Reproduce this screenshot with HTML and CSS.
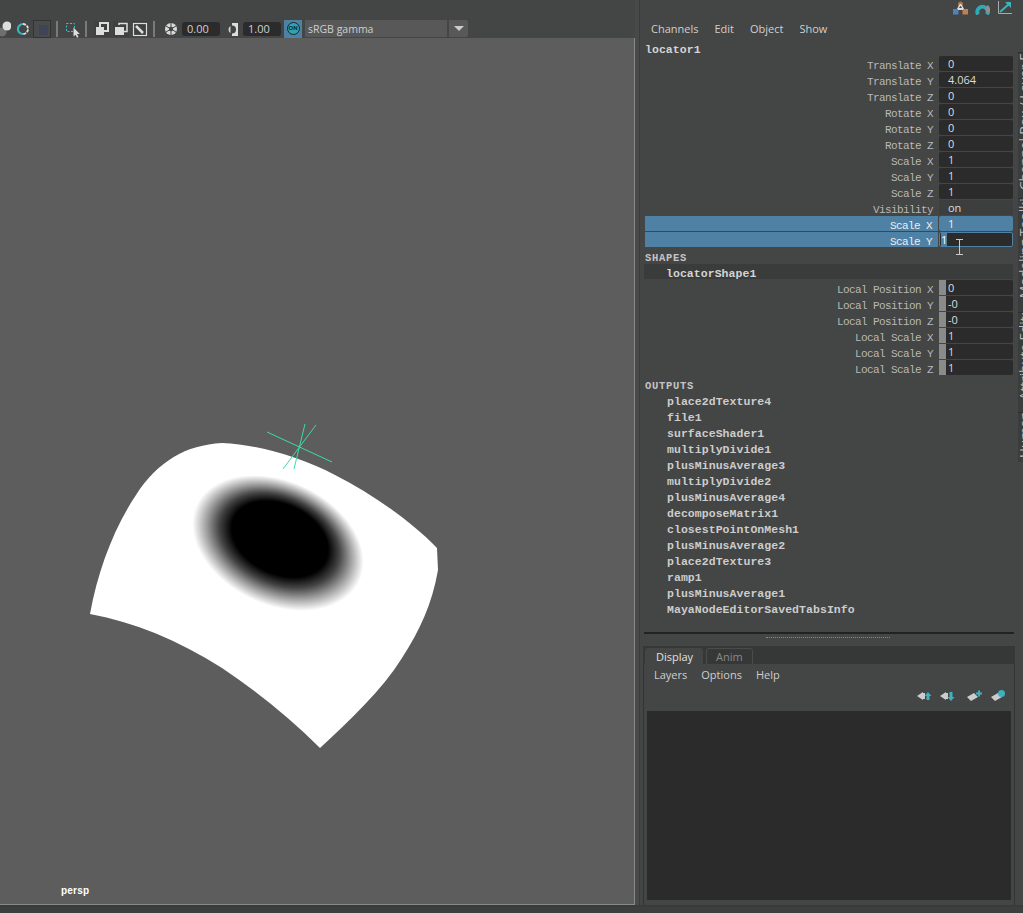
FILE: index.html
```html
<!DOCTYPE html>
<html lang="en">
<head>
<meta charset="utf-8">
<title>Channel Box</title>
<link rel="stylesheet" href="styles.css">
</head>
<body>
<div class="app">
  <div class="main">
    <section class="left">
      <div class="topgap"></div>
      <div class="toolbar">
        <svg class="ic w11" viewBox="0 0 11 18"><circle cx="2" cy="12" r="4.500" fill="#6f6f6f"/><circle cx="7" cy="6" r="4.500" fill="#ddd"/></svg>
        <svg class="ic w12 m6" viewBox="0 0 12 18"><path d="M6 4a5 5 0 0 1 0 10" fill="none" stroke="#ddd" stroke-width="1.800" stroke-dasharray="3 1"/><path d="M6 4a5 5 0 0 0 0 10" fill="none" stroke="#39b5c0" stroke-width="2.200"/></svg>
        <div class="swatchbtn m4"><span class="swatch"></span></div>
        <i class="sep m5"></i>
        <svg class="ic w15 m7" viewBox="0 0 15 18"><rect x="1.500" y="3.500" width="8" height="8" fill="none" stroke="#39c5c8" stroke-dasharray="2 1.500"/><path d="M8.500 7.500v9l2-1.800 1.500 3 1.500-.8-1.500-3h2.800z" fill="#ddd"/></svg>
        <i class="sep m5"></i>
        <div class="toolbtn m7"><svg viewBox="0 0 16 16"><rect x="6" y="2" width="8" height="8" fill="none" stroke="#ddd" stroke-width="2"/><rect x="2" y="6" width="8" height="8" fill="#ddd"/></svg></div>
        <div class="toolbtn m3"><svg viewBox="0 0 16 16"><path d="M6 4V2.500h8v8h-3" fill="none" stroke="#ddd" stroke-width="1.500"/><rect x="2" y="6" width="9" height="8" fill="#ddd"/></svg></div>
        <div class="toolbtn m3"><svg viewBox="0 0 16 16"><rect x="1.500" y="2.500" width="13" height="12" fill="none" stroke="#ddd" stroke-width="1.200"/><path d="M4 5l7 7" stroke="#ddd" stroke-width="2.500"/></svg></div>
        <i class="sep m5"></i>
        <svg class="ic w12 m10" viewBox="0 0 12 18"><circle cx="6" cy="9" r="6" fill="#d8d8d8"/><path d="M6 9L6 3M6 9L11 6M6 9L11 12M6 9L6 15M6 9L1 12M6 9L1 6" stroke="#444" stroke-width="1"/><circle cx="6" cy="9" r="2.200" fill="#444"/></svg>
        <span class="numfield m5">0.00</span>
        <svg class="ic w12 m6" viewBox="0 0 12 18"><path d="M6 3h6v13H6z" fill="#ddd"/><circle cx="6" cy="9.500" r="4" fill="#444"/><path d="M4.500 6a4 4 0 0 0 0 7z" fill="#ccc"/></svg>
        <span class="numfield m5">1.00</span>
        <div class="onbtn m3"><span class="onring">ON</span></div>
        <div class="combo m3">sRGB gamma</div>
        <div class="comboarrow m2"><span class="tri"></span></div>
      </div>
      <div class="viewport">
        <svg class="scene" viewBox="0 0 634 866">
          <defs>
            <radialGradient id="spot" cx="0.5" cy="0.5" r="0.5" fx="0.5" fy="0.42">
              <stop offset="0" stop-color="#000"/>
              <stop offset="0.56" stop-color="#000"/>
              <stop offset="0.7" stop-color="#444"/>
              <stop offset="0.85" stop-color="#a4a4a4"/>
              <stop offset="1" stop-color="#fff"/>
            </radialGradient>
          </defs>
          <path d="M90 576C98 532 114 490 136 457C158 423 186 407 222 405C262 407 302 420 335 437C372 456 410 482 437 510L438 532C432 566 420 592 402 620C382 652 350 682 320 710C290 680 258 654 222 630C178 602 134 584 90 576Z" fill="#fff"/>
          <ellipse cx="278" cy="505" rx="90" ry="62" transform="rotate(25 278 505)" fill="url(#spot)"/>
          <path d="M267 394L332 424M305 386L294 431M316 387L283 431" stroke="#3ddbaa" stroke-width="1" fill="none"/>
        </svg>
        <span class="persp">persp</span>
      </div>
    </section>
    <div class="divider"></div>
    <section class="right">
      <div class="panel">
        <div class="panelicons">
          <svg class="pi" viewBox="0 0 15 14"><circle cx="7.500" cy="3" r="2.500" fill="#a8734f"/><path d="M7.500 3L3 11M7.500 3L12 11" stroke="#ddd" stroke-width="1.500"/><rect x="0" y="8" width="5.500" height="5.500" fill="#4f81c0"/><rect x="9.500" y="8" width="5.500" height="5.500" fill="#c08050"/><rect x="5" y="7" width="5" height="2" fill="#ddd"/></svg>
          <svg class="pi" viewBox="0 0 15 14"><path d="M3 13.500A5.200 5.200 0 1 1 12 13.500" fill="none" stroke="#2fa9b5" stroke-width="4"/><path d="M11.500 5.500a5.200 5.200 0 0 1 1 6" fill="none" stroke="#8f8f8f" stroke-width="4"/></svg>
          <svg class="pi" viewBox="0 0 15 14"><path d="M1.500 0v12.500H15" fill="none" stroke="#aaa"/><path d="M3 11L12 3" stroke="#39b5c0" stroke-width="2"/><path d="M8 1h6v6z" fill="#39b5c0"/></svg>
        </div>
        <nav class="menubar channels">
          <span>Channels</span><span>Edit</span><span>Object</span><span>Show</span>
        </nav>
        <div class="nodetitle">locator1</div>
        <div class="attrs">
          <div class="row"><span class="label">Translate X</span><span class="field">0</span></div>
          <div class="row"><span class="label">Translate Y</span><span class="field">4.064</span></div>
          <div class="row"><span class="label">Translate Z</span><span class="field">0</span></div>
          <div class="row"><span class="label">Rotate X</span><span class="field">0</span></div>
          <div class="row"><span class="label">Rotate Y</span><span class="field">0</span></div>
          <div class="row"><span class="label">Rotate Z</span><span class="field">0</span></div>
          <div class="row"><span class="label">Scale X</span><span class="field">1</span></div>
          <div class="row"><span class="label">Scale Y</span><span class="field">1</span></div>
          <div class="row"><span class="label">Scale Z</span><span class="field">1</span></div>
          <div class="row"><span class="label">Visibility</span><span class="field dim">on</span></div>
          <div class="row sel"><span class="label">Scale X</span><span class="field">1</span></div>
          <div class="row sel"><span class="label">Scale Y</span><span class="field edit"><b class="caret">1</b>
            <svg class="ibeam" viewBox="0 0 9 16"><path d="M1 .5h7M1 15.500h7M4.500 .5v15" stroke="#ccc" fill="none"/></svg></span></div>
        </div>
        <div class="section">SHAPES</div>
        <div class="shapehead">locatorShape1</div>
        <div class="attrs">
          <div class="row"><span class="label">Local Position X</span><span class="field keyed">0</span></div>
          <div class="row"><span class="label">Local Position Y</span><span class="field keyed">-0</span></div>
          <div class="row"><span class="label">Local Position Z</span><span class="field keyed">-0</span></div>
          <div class="row"><span class="label">Local Scale X</span><span class="field keyed">1</span></div>
          <div class="row"><span class="label">Local Scale Y</span><span class="field keyed">1</span></div>
          <div class="row"><span class="label">Local Scale Z</span><span class="field keyed">1</span></div>
        </div>
        <div class="section">OUTPUTS</div>
        <ul class="outputs">
          <li>place2dTexture4</li>
          <li>file1</li>
          <li>surfaceShader1</li>
          <li>multiplyDivide1</li>
          <li>plusMinusAverage3</li>
          <li>multiplyDivide2</li>
          <li>plusMinusAverage4</li>
          <li>decomposeMatrix1</li>
          <li>closestPointOnMesh1</li>
          <li>plusMinusAverage2</li>
          <li>place2dTexture3</li>
          <li>ramp1</li>
          <li>plusMinusAverage1</li>
          <li>MayaNodeEditorSavedTabsInfo</li>
        </ul>
        <div class="splitline"></div>
        <div class="dots"></div>
        <div class="tabbar">
          <span class="tab active">Display</span>
          <span class="tab">Anim</span>
        </div>
        <div class="layers">
          <nav class="menubar layermenu">
            <span>Layers</span><span>Options</span><span>Help</span>
          </nav>
          <div class="layericons">
            <svg class="li" viewBox="0 0 15 12"><path d="M0 6l6-4v8z" fill="#ccc"/><path d="M4 3h4v6H4z" fill="#ccc"/><path d="M11 2l3.500 4H12.500v4h-3V6H7.500z" fill="#3fb0bd"/></svg>
            <svg class="li l2" viewBox="0 0 15 12"><path d="M0 6l6-4v8z" fill="#ccc"/><path d="M4 3h4v6H4z" fill="#ccc"/><path d="M11 11l3.500-4H12.500V2h-3v5H7.500z" fill="#3fb0bd"/></svg>
            <svg class="li l3" viewBox="0 0 15 12"><path d="M0 7l7-4 4 4-7 4z" fill="#ccc"/><path d="M9 3.500h6M12 .5v6" stroke="#3fb0bd" stroke-width="2"/></svg>
            <svg class="li l4" viewBox="0 0 15 12"><path d="M0 7l7-4 4 4-7 4z" fill="#ccc"/><circle cx="10.500" cy="3.500" r="3.500" fill="#3fb0bd"/></svg>
          </div>
          <div class="layerlist"></div>
        </div>
      </div>
      <div class="sidetabs">
        <div class="sidetab t1"><span>Channel Box / Layer Editor</span></div>
        <div class="sidetab t2"><span>Modeling Toolkit</span></div>
        <div class="sidetab t3"><span>Attribute Editor</span></div>
        <div class="sidetab t4"><span>HumanIK</span></div>
      </div>
    </section>
  </div>
  <div class="statusbar"></div>
</div>
</body>
</html>
```
FILE: styles.css
```css
* { box-sizing: border-box; }
html, body { margin: 0; padding: 0; height: 100%; }
body { background: #444545; overflow: hidden; font-family: "Open Sans", "Liberation Sans", sans-serif; }
.app { width: 1023px; height: 913px; display: flex; flex-direction: column; overflow: hidden; }
.main { display: flex; height: 905px; }
.statusbar { height: 8px; background: #3d3e3e; border-top: 2px solid #393a3a; }

.left { width: 635px; display: flex; flex-direction: column; flex: none; }
.topgap { height: 19px; flex: none; }
.toolbar { height: 19px; flex: none; display: flex; align-items: center; background: #444545; }
.viewport { position: relative; flex: 1; background: #5d5d5d; border-right: 1px solid #8a8a8a; border-bottom: 1px solid #8a8a8a; }
.scene { display: block; width: 634px; height: 866px; }
.persp { position: absolute; left: 61px; top: 846px; font: bold 10px/14px "Liberation Sans", sans-serif; letter-spacing: .2px; color: #fff; }

.ic { display: block; height: 18px; flex: none; }
.w11 { width: 11px; } .w12 { width: 12px; } .w15 { width: 15px; }
.m2 { margin-left: 2px; } .m3 { margin-left: 3px; } .m4 { margin-left: 4px; } .m5 { margin-left: 5px; }
.m6 { margin-left: 6px; } .m7 { margin-left: 7px; } .m10 { margin-left: 10px; }
.sep { display: block; width: 2px; height: 16px; background: #7a7a7a; flex: none; }
.swatchbtn { width: 18px; height: 18px; border: 1px solid #333; background: #4a4b4b; display: flex; justify-content: flex-end; align-items: flex-end; padding: 2px; flex: none; }
.swatch { width: 9px; height: 10px; background: #3f4556; display: block; }
.toolbtn { width: 16px; height: 16px; background: #3f4040; flex: none; }
.toolbtn svg { display: block; width: 16px; height: 16px; }
.numfield { width: 38px; height: 14px; background: #2b2b2b; border-radius: 3px; color: #d0d0d0; font-size: 11px; line-height: 14px; padding-left: 5px; flex: none; }
.onbtn { width: 18px; height: 18px; background: #4f81a5; display: flex; align-items: center; justify-content: center; flex: none; }
.onring { width: 13px; height: 13px; border-radius: 50%; background: #2ea2ad; border: 1px solid #222; color: #123; font: bold 6px/11px "Liberation Sans", sans-serif; text-align: center; }
.combo { width: 142px; height: 17px; background: #585858; color: #cfcfcf; font-size: 10.500px; line-height: 18px; padding-left: 3px; flex: none; }
.comboarrow { width: 19px; height: 17px; background: #585858; border-radius: 0 2px 2px 0; display: flex; align-items: center; justify-content: center; flex: none; }
.tri { width: 0; height: 0; border-left: 5px solid transparent; border-right: 5px solid transparent; border-top: 5px solid #ccc; }

.divider { width: 5px; flex: none; background: #484949; border-right: 1px solid #3a3b3b; }
.right { flex: 1; display: flex; min-width: 0; }
.panel { width: 378px; flex: none; padding: 0 5px; display: flex; flex-direction: column; background: #444545; }
.panelicons { height: 19px; display: flex; justify-content: flex-end; gap: 7px; padding: 1px 1px 0 0; flex: none; }
.pi { display: block; width: 15px; height: 14px; }
.menubar { display: flex; font-size: 11px; line-height: 16px; color: #cfcfcf; flex: none; }
.channels { height: 20px; gap: 16px; padding: 2px 0 0 6px; }
.nodetitle { height: 17px; font: bold 11.500px/22px "Liberation Mono", monospace; letter-spacing: .05px; color: #d4d4d4; flex: none; }
.attrs { display: flex; flex-direction: column; flex: none; }
.row { display: flex; height: 15px; margin-bottom: 1px; flex: none; }
.label { flex: 1; text-align: right; padding-right: 6px; font: 11px/20px "Liberation Mono", monospace; letter-spacing: -.6px; color: #b8b8b8; white-space: nowrap; height: 15px; }
.field { position: relative; width: 74px; background: #2b2b2b; border-radius: 2px; color: #dcdcdc; font-size: 11px; line-height: 16px; padding-left: 9px; flex: none; }
.dim { background: #3d3e3e; }
.sel .label { background: #4f81a5; color: #eee; margin-right: 1px; }
.sel .field { background: #4f81a5; color: #eee; }
.sel .edit { background: #2b2b2b; border: 1px solid #4f81a5; padding-left: 1px; line-height: 13px; }
.caret { display: inline-block; background: #4f81a5; font-weight: 400; width: 6px; text-align: center; color: #fff; }
.ibeam { position: absolute; left: 15px; top: 6px; width: 9px; height: 16px; }
.keyed { border-left: 7px solid #8a8a8a; border-radius: 0 2px 2px 0; padding-left: 2px; }
.section { height: 16px; font: bold 10.500px/20px "Liberation Mono", monospace; letter-spacing: .7px; color: #c4c4c4; flex: none; }
.shapehead { height: 15px; margin: 0 0 1px -1px; background: #3a3b3b; padding-left: 22px; font: bold 11.500px/20px "Liberation Mono", monospace; letter-spacing: .05px; color: #d4d4d4; flex: none; }
.outputs { list-style: none; margin: 1px 0 0; padding: 0 0 0 22px; flex: none; }
.outputs li { height: 16px; font: bold 11.500px/18px "Liberation Mono", monospace; letter-spacing: .05px; color: #cdcdcd; }
.splitline { height: 2px; margin: 15px 0 0 -1px; background: #222; width: 370px; flex: none; }
.dots { height: 1px; width: 124px; margin: 3px 0 0 121px; border-top: 1px dotted #8a8a8a; flex: none; }
.tabbar { height: 18px; margin: 8px 0 0 -2px; width: 372px; background: #363737; display: flex; align-items: flex-end; padding-left: 2px; gap: 3px; flex: none; }
.tab { height: 16px; color: #8a8a8a; font-size: 11px; line-height: 16px; padding: 0 9px; border: 1px solid #4a4b4b; border-bottom: 0; border-radius: 3px 3px 0 0; }
.tab.active { background: #444545; color: #e0e0e0; border-color: #444545; padding: 0 10px; width: 58px; }
.layers { flex: 1; margin-left: -2px; width: 372px; display: flex; flex-direction: column; background: #444545; border-left: 1px solid #333; border-right: 1px solid #333; padding-bottom: 5px; }
.layermenu { height: 22px; gap: 14px; padding: 3px 0 0 10px; flex: none; }
.layericons { height: 25px; display: flex; justify-content: flex-end; padding: 4px 8px 0 0; flex: none; }
.li { display: block; width: 15px; height: 12px; }
.l2 { margin-left: 8px; } .l3 { margin-left: 12px; } .l4 { margin-left: 9px; }
.layerlist { flex: 1; margin: 0 3px; background: #2b2b2b; }

.sidetabs { width: 5px; flex: none; display: flex; flex-direction: column; padding-top: 52px; background: #444545; overflow: hidden; }
.sidetab { background: #3b3c3c; border-top: 1px solid #2f2f2f; overflow: hidden; flex: none; }
.sidetab span { display: block; writing-mode: vertical-rl; transform: rotate(180deg); font-size: 13.500px; line-height: 12px; color: #bbb; height: 100%; white-space: nowrap; }
.t1 { height: 146px; } .t1 span { padding-top: 8px; }
.t2 { height: 114px; } .t2 span { padding-top: 14px; }
.t3 { height: 100px; } .t3 span { padding-top: 12px; }
.t4 { height: 50px; } .t4 span { padding-top: 4px; }
```
